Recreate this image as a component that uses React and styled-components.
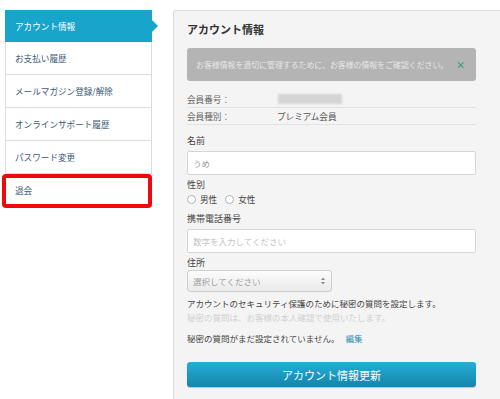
import React from "react";
import styled, { createGlobalStyle } from "styled-components";

const Global = createGlobalStyle`
  html, body { margin: 0; padding: 0; background: #fff; overflow: hidden; }
  body { font-family: "Noto Sans CJK JP", "Noto Sans", sans-serif; }
  * { box-sizing: border-box; }
`;

const Page = styled.div`
  display: flex;
  align-items: flex-start;
  padding-top: 10px;
  padding-left: 5px;
  width: 500px;
  height: 399px;
`;

const Sidebar = styled.nav`
  width: 147px;
  flex-shrink: 0;
  display: flex;
  flex-direction: column;
`;

const NavItem = styled.div`
  position: relative;
  height: ${(p) => (p.$active ? "32px" : "33px")};
  display: flex;
  align-items: center;
  font-size: 8.6px;
  color: ${(p) => (p.$active ? "#fff" : "#3d5a76")};
  background: ${(p) => (p.$active ? "#18a5cb" : "#fff")};
  border-left: ${(p) => (p.$active ? "none" : "1px solid #dcdcdc")};
  border-right: ${(p) => (p.$active ? "none" : "1px solid #dcdcdc")};
  border-bottom: ${(p) => (p.$active ? "none" : "1px solid #dcdcdc")};
  padding-left: ${(p) => (p.$active ? "10px" : "9px")};
  &::before {
    content: "";
    display: ${(p) => (p.$active ? "block" : "none")};
    position: absolute;
    right: -6px;
    top: 10px;
    border-top: 6px solid transparent;
    border-bottom: 6px solid transparent;
    border-left: 6px solid #18a5cb;
  }
  &::after {
    content: "";
    display: ${(p) => (p.$marked ? "block" : "none")};
    position: absolute;
    left: -4px;
    right: -1px;
    top: 0px;
    bottom: -2px;
    border: 4px solid #ee0a0a;
    border-radius: 4px;
  }
`;

const Panel = styled.main`
  margin-left: 21px;
  flex-shrink: 0;
  width: 340px;
  min-height: 400px;
  background: #f4f4f4;
  border: 1px solid #dcdcdc;
  border-radius: 2px;
  padding: 11px 13px 0;
`;

const Form = styled.div`
  width: 289px;
  display: flex;
  flex-direction: column;
`;

const Title = styled.h1`
  margin: 0 0 12px;
  font-size: 11px;
  line-height: 14px;
  font-weight: 700;
  color: #333;
`;

const Alert = styled.div`
  height: 33px;
  background: #b4b4b4;
  border-radius: 3px;
  display: flex;
  align-items: center;
  justify-content: space-between;
  padding: 0 11px 0 9px;
  font-size: 7.9px;
  color: #e6e6e6;
`;

const Close = styled.span`
  color: #3c9a7c;
  font-size: 9px;
  font-weight: 700;
  line-height: 1;
`;

const InfoList = styled.div`
  margin-top: 10px;
  display: flex;
  flex-direction: column;
`;

const InfoRow = styled.div`
  height: 17px;
  display: flex;
  align-items: center;
  border-bottom: 1px solid #e2e2e2;
  font-size: 8.6px;
  color: #555;
`;

const InfoLabel = styled.span`
  width: 90px;
  flex-shrink: 0;
  color: #666;
`;

const Blurred = styled.span`
  display: inline-block;
  width: 64px;
  height: 10px;
  margin-left: 1px;
  background: #d4d4d4;
  filter: blur(1px);
`;

const Label = styled.div`
  margin-top: ${(p) => p.$mt || 3}px;
  font-size: 9px;
  line-height: 14px;
  color: #444;
`;

const Input = styled.div`
  margin-top: ${(p) => p.$mt || 3}px;
  height: 24px;
  background: #fff;
  border: 1px solid #d6d6d6;
  border-radius: 2px;
  display: flex;
  align-items: center;
  padding-left: 5px;
  font-size: 8.5px;
  color: ${(p) => (p.$placeholder ? "#c4c4c4" : "#999")};
`;

const RadioRow = styled.div`
  display: flex;
  align-items: center;
  height: 14px;
  font-size: 8.6px;
  color: #444;
`;

const RadioItem = styled.label`
  display: flex;
  align-items: center;
  margin-right: 8px;
`;

const Circle = styled.span`
  width: 9px;
  height: 9px;
  border-radius: 50%;
  border: 1px solid #b0b0b0;
  background: #fff;
  margin-right: 4px;
`;

const Select = styled.div`
  width: 145px;
  height: 22px;
  background: linear-gradient(#fcfcfc, #eaeaea);
  border: 1px solid #cfcfcf;
  border-radius: 3px;
  display: flex;
  align-items: center;
  justify-content: space-between;
  padding: 0 6px 0 5px;
  font-size: 8.5px;
  color: #a0a0a0;
`;

const Text = styled.p`
  margin: ${(p) => p.$mt || 0}px 0 0;
  font-size: 8.5px;
  line-height: 14px;
  color: ${(p) => (p.$muted ? "#d0d0d0" : "#444")};
`;

const Link = styled.a`
  color: #2f8fb3;
  margin-left: 6px;
  text-decoration: none;
`;

const Button = styled.button`
  margin-top: 17px;
  height: 25px;
  width: 100%;
  border: none;
  border-radius: 3px;
  background: linear-gradient(#22b0d8, #1584ab);
  box-shadow: 0 1px 1px rgba(0, 0, 0, 0.2);
  color: #fff;
  font-family: inherit;
  font-size: 11px;
  padding: 0;
`;

const SelectArrows = () => (
  <svg width="4" height="8" viewBox="0 0 4 8">
    <path d="M0 3 L2 0.5 L4 3 Z M0 5 L2 7.5 L4 5 Z" fill="#8a8a8a" />
  </svg>
);

const navItems = [
  "アカウント情報",
  "お支払い履歴",
  "メールマガジン登録/解除",
  "オンラインサポート履歴",
  "パスワード変更",
  "退会",
];

export default function App() {
  return (
    <>
      <Global />
      <Page>
        <Sidebar>
          {navItems.map((t, i) => (
            <NavItem key={t} $active={i === 0} $marked={t === "退会"}>
              {t}
            </NavItem>
          ))}
        </Sidebar>
        <Panel>
          <Form>
            <Title>アカウント情報</Title>
            <Alert>
              <span>お客様情報を適切に管理するために、お客様の情報をご確認ください。</span>
              <Close>×</Close>
            </Alert>
            <InfoList>
              <InfoRow>
                <InfoLabel>会員番号：</InfoLabel>
                <Blurred />
              </InfoRow>
              <InfoRow>
                <InfoLabel>会員種別：</InfoLabel>
                <span>プレミアム会員</span>
              </InfoRow>
            </InfoList>
            <Label $mt={9}>名前</Label>
            <Input>うめ</Input>
            <Label>性別</Label>
            <RadioRow>
              <RadioItem><Circle />男性</RadioItem>
              <RadioItem><Circle />女性</RadioItem>
            </RadioRow>
            <Label $mt={6}>携帯電話番号</Label>
            <Input $mt={3} $placeholder>数字を入力してください</Input>
            <Label $mt={3}>住所</Label>
            <Select>
              <span>選択してください</span>
              <SelectArrows />
            </Select>
            <Text $mt={4}>アカウントのセキュリティ保護のために秘密の質問を設定します。</Text>
            <Text $muted>秘密の質問は、お客様の本人確認で使用いたします。</Text>
            <Text $mt={7}>
              秘密の質問がまだ設定されていません。
              <Link href="#">編集</Link>
            </Text>
            <Button>アカウント情報更新</Button>
          </Form>
        </Panel>
      </Page>
    </>
  );
}
